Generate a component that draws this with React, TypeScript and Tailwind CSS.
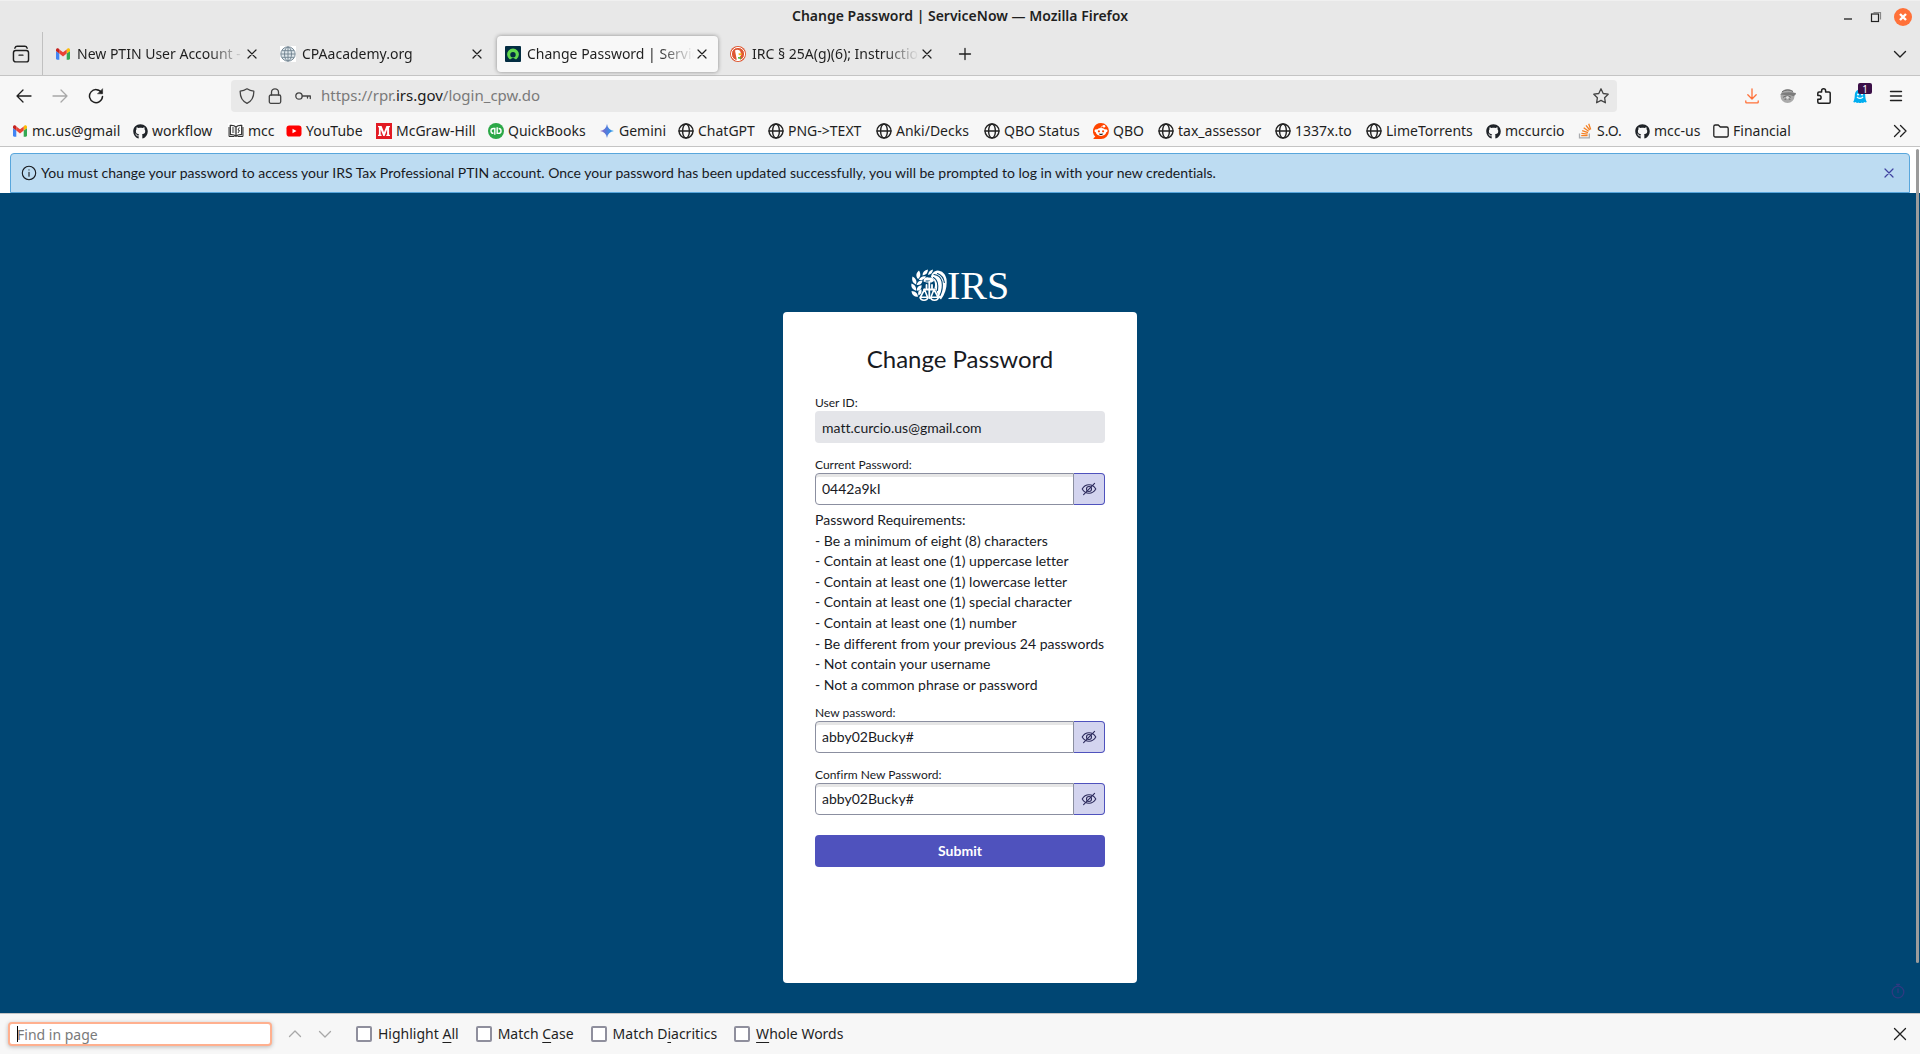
import React from "react";
import { FaGithub } from "react-icons/fa";

type IconProps = { className?: string };

function Stroke({ children, className = "size-4", width = 1.3 }: { children: React.ReactNode; className?: string; width?: number }) {
  return (
    <svg viewBox="0 0 16 16" className={`shrink-0 ${className}`} fill="none" stroke="currentColor" strokeWidth={width} strokeLinecap="round" strokeLinejoin="round" aria-hidden="true">
      {children}
    </svg>
  );
}

/* ---------- site icons ---------- */

function Gmail() {
  return (
    <svg viewBox="0 0 16 16" className="size-4 shrink-0" aria-hidden="true">
      <path d="M1 5v7.6c0 .7.5 1.2 1.200 1.200H4.300V7.400z" fill="#4285f4" />
      <path d="M11.700 13.800h2.100c.7 0 1.200-.5 1.200-1.200V5l-3.300 2.400z" fill="#34a853" />
      <path d="M11.700 3.400v4.200L15 5.100V4c0-1.500-1.600-2.200-2.700-1.300z" fill="#fbbc04" />
      <path d="M4.300 7.600V3.400L8 6.200l3.700-2.800v4.200L8 10.400z" fill="#ea4335" />
      <path d="M1 4v1.100l3.300 2.500V3.400l-.6-.7C2.600 1.800 1 2.500 1 4z" fill="#c5221f" />
    </svg>
  );
}

function Github() {
  return <FaGithub className="size-[15px] shrink-0 text-[#1f2328]" aria-hidden="true" />;
}

function Book() {
  return (
    <span className="flex size-4 shrink-0 items-center justify-center bg-white">
      <svg viewBox="0 0 16 16" className="size-4 text-[#333]" fill="none" stroke="currentColor" strokeWidth="1.300" aria-hidden="true">
        <path d="M8 4C6.500 2.600 4.500 2.300 2.300 2.500v9.200c2.200-.2 4.200.1 5.700 1.500 1.500-1.400 3.500-1.700 5.700-1.500V2.500C11.500 2.300 9.500 2.600 8 4zM8 4v9" />
        <path d="M1 4v9.500h5.500M15 4v9.500H9.500M4 5h2.300M4 7h2.300M4 9h2.300M11.300 4.500L10 7l1.500.5L10 10" strokeWidth="1" />
      </svg>
    </span>
  );
}

function YouTube() {
  return (
    <svg viewBox="0 0 16 16" className="size-4 shrink-0" aria-hidden="true">
      <rect x="0.500" y="2.500" width="15" height="11" rx="2.800" fill="#f00" />
      <path d="M6.500 5.700v4.600l4-2.300z" fill="#fff" />
    </svg>
  );
}

function McGraw() {
  return (
    <svg viewBox="0 0 16 16" className="size-4 shrink-0" aria-hidden="true">
      <path d="M0 0h16v16H0z" fill="#e21a23" />
      <path d="M2 13V11.700h.9V4.300H2V3h3.600L8 9.200 10.400 3H14v1.300h-.9v7.400h.9V13h-3.700v-1.300h.8V6.500L8.600 13H7.300L4.700 6.500v5.200h.9V13z" fill="#fff" />
    </svg>
  );
}

function QuickBooks() {
  return (
    <svg viewBox="0 0 16 16" className="size-4 shrink-0" aria-hidden="true">
      <circle cx="8" cy="8" r="8" fill="#2ca847" />
      <path d="M6.800 11.800V5.500H5.400a2.400 2.400 0 000 4.800M9.200 4.200v6.200h1.400a2.400 2.400 0 000-4.900" fill="none" stroke="#fff" strokeWidth="1.400" />
    </svg>
  );
}

function Gemini() {
  return (
    <svg viewBox="0 0 16 16" className="size-4 shrink-0" aria-hidden="true">
      <defs>
        <linearGradient id="gem" x1="0" x2="1">
          <stop offset="0" stopColor="#9a6ac0" />
          <stop offset="0.400" stopColor="#5b76d8" />
          <stop offset="1" stopColor="#1fa3ee" />
        </linearGradient>
      </defs>
      <path d="M8 1c.6 4 3 6.400 7 7-4 .6-6.400 3-7 7-.6-4-3-6.400-7-7 4-.6 6.400-3 7-7z" fill="url(#gem)" />
    </svg>
  );
}

function Globe() {
  return (
    <Stroke className="size-4 text-[#222]" width={1.400}>
      <circle cx="8" cy="8" r="7" />
      <ellipse cx="8" cy="8" rx="3.400" ry="7" />
      <path d="M1 8h14" />
    </Stroke>
  );
}

function GreyGlobe() {
  return (
    <span className="flex size-4 shrink-0 bg-white">
      <svg viewBox="0 0 16 16" className="size-4" fill="none" stroke="#6d808d" strokeWidth="0.900" aria-hidden="true">
        <circle cx="8" cy="8" r="7.200" fill="#dfe7ec" />
        <ellipse cx="8" cy="8" rx="3.500" ry="7" />
        <path d="M8 1v14M1 8h14M2 4.700h12M2 11.300h12" />
      </svg>
    </span>
  );
}

function Reddit() {
  return (
    <svg viewBox="0 0 16 16" className="size-4 shrink-0" aria-hidden="true">
      <path d="M8 0a8 8 0 11-.1 16H.8c-.4 0-.6-.5-.3-.8l1.800-1.600A8 8 0 018 0z" fill="#ff4500" />
      <circle cx="3" cy="7.800" r="1.500" fill="#fff" />
      <circle cx="13" cy="7.800" r="1.500" fill="#fff" />
      <circle cx="11" cy="3.200" r="1.300" fill="#fff" />
      <path d="M8 5c.1-1.500.9-2 2.400-1.900" stroke="#fff" strokeWidth=".7" fill="none" />
      <ellipse cx="8" cy="9" rx="5.200" ry="3.900" fill="#fff" />
      <circle cx="5.900" cy="8.300" r="1.100" fill="#ff4500" />
      <circle cx="10.100" cy="8.300" r="1.100" fill="#ff4500" />
      <path d="M5.800 10.400c1.300.4 3.100.4 4.400 0-.4 1-1.200 1.500-2.200 1.500s-1.800-.5-2.200-1.500z" fill="#222" />
    </svg>
  );
}

function StackOverflow() {
  return (
    <svg viewBox="0 0 16 16" className="size-4 shrink-0" fill="none" strokeWidth="1.300" aria-hidden="true">
      <path d="M2.500 10.500v4.300h9.800v-4.300" stroke="#a9abae" />
      <path d="M4.200 12.700h6.400M4.400 10.300l6.200.8M5.200 7.600l5.800 2M6.700 4.700l5 3.500M9 2.300l3.700 4.700M11.700.8l2 5.700" stroke="#f48024" />
    </svg>
  );
}

function Folder() {
  return (
    <Stroke className="size-4 text-[#222]" width={1.300}>
      <path d="M.8 12.500v-9A1.500 1.500 0 012.300 2h3l2 2h6.400a1.500 1.500 0 011.500 1.500v7a1.500 1.500 0 01-1.500 1.500H2.300a1.500 1.500 0 01-1.500-1.500z" />
    </Stroke>
  );
}

function ServiceNow() {
  return (
    <svg viewBox="0 0 16 16" className="size-4 shrink-0" aria-hidden="true">
      <rect width="16" height="16" rx="1" fill="#032d42" />
      <path d="M4.300 13a5.900 5.900 0 117.400 0c-.5.4-1.100.4-1.600 0a3.200 3.200 0 00-4.200 0c-.5.400-1.100.400-1.600 0z" fill="#62d84e" />
      <circle cx="8" cy="8.700" r="2.700" fill="#032d42" />
    </svg>
  );
}

function DuckDuckGo() {
  return (
    <svg viewBox="0 0 16 16" className="size-4 shrink-0" aria-hidden="true">
      <circle cx="8" cy="8" r="8" fill="#de5833" />
      <circle cx="8" cy="8" r="6.600" fill="none" stroke="#fff" strokeWidth="1" />
      <path d="M5 4.500C6.500 3 10 3.500 10.500 6l.7 3-1.500 2 .6 3c-1.300.4-2.600.3-3.500 0z" fill="#fff" />
      <path d="M8.500 7.200l3.300.4-.4 1.400-2.600.2z" fill="#fdb813" />
      <path d="M8 11l3 .3v1.700l-3-.6z" fill="#4cba3c" />
    </svg>
  );
}

/* ---------- browser chrome icons ---------- */

const Close = ({ className = "size-4" }: IconProps) => (
  <Stroke className={className} width={1.200}>
    <path d="M4 4l8 8M12 4l-8 8" />
  </Stroke>
);

const ChevronDown = ({ className = "size-4" }: IconProps) => (
  <Stroke className={className} width={1.400}>
    <path d="M2.500 5.500L8 11l5.500-5.500" />
  </Stroke>
);

function EyeOff() {
  return (
    <Stroke className="size-4 text-[#2c2a5c]" width={1.100}>
      <path d="M1.200 8c1.700-2.900 4.100-4.200 6.800-4.200s5.100 1.300 6.800 4.200c-1.700 2.900-4.100 4.200-6.800 4.200S2.900 10.900 1.200 8z" />
      <circle cx="8" cy="8" r="2.500" />
      <path d="M2.600 13.600L13.600 2.400" />
    </Stroke>
  );
}

/* ---------- data ---------- */

const tabs = [
  { title: "New PTIN User Account -", icon: <Gmail /> },
  { title: "CPAacademy.org", icon: <GreyGlobe /> },
  { title: "Change Password | Servic", icon: <ServiceNow />, active: true },
  { title: "IRC § 25A(g)(6); Instructio", icon: <DuckDuckGo /> },
];

const bookmarks = [
  { label: "mc.us@gmail", icon: <Gmail />, width: "w-[121px]" },
  { label: "workflow", icon: <Github />, width: "w-[95px]" },
  { label: "mcc", icon: <Book />, width: "w-[58px]" },
  { label: "YouTube", icon: <YouTube />, width: "w-[90px]" },
  { label: "McGraw-Hill", icon: <McGraw />, width: "w-[112px]" },
  { label: "QuickBooks", icon: <QuickBooks />, width: "w-[111px]" },
  { label: "Gemini", icon: <Gemini />, width: "w-[79px]" },
  { label: "ChatGPT", icon: <Globe />, width: "w-[90px]" },
  { label: "PNG->TEXT", icon: <Globe />, width: "w-[108px]" },
  { label: "Anki/Decks", icon: <Globe />, width: "w-[108px]" },
  { label: "QBO Status", icon: <Globe />, width: "w-[109px]" },
  { label: "QBO", icon: <Reddit />, width: "w-[65px]" },
  { label: "tax_assessor", icon: <Globe />, width: "w-[117px]" },
  { label: "1337x.to", icon: <Globe />, width: "w-[91px]" },
  { label: "LimeTorrents", icon: <Globe />, width: "w-[120px]" },
  { label: "mccurcio", icon: <Github />, width: "w-[91px]" },
  { label: "S.O.", icon: <StackOverflow />, width: "w-[58px]" },
  { label: "mcc-us", icon: <Github />, width: "w-[78px]" },
  { label: "Financial", icon: <Folder />, width: "w-[90px]" },
];

const requirements = [
  "- Be a minimum of eight (8) characters",
  "- Contain at least one (1) uppercase letter",
  "- Contain at least one (1) lowercase letter",
  "- Contain at least one (1) special character",
  "- Contain at least one (1) number",
  "- Be different from your previous 24 passwords",
  "- Not contain your username",
  "- Not a common phrase or password",
];

/* ---------- browser chrome ---------- */

function TitleBar() {
  return (
    <header className="grid h-8 grid-cols-[1fr_auto_1fr] items-center border-t border-[#f0f0f0] bg-[#e8e8e8]">
      <h1 className="col-start-2 pb-0.5 text-sm font-semibold">Change Password | ServiceNow — Mozilla Firefox</h1>
      <div className="flex items-center justify-end gap-2 pr-2">
        <button aria-label="Minimize" className="flex size-5 items-center justify-center">
          <Stroke className="size-4"><path d="M4 10h8" strokeLinecap="butt" /></Stroke>
        </button>
        <button aria-label="Restore" className="flex size-5 items-center justify-center">
          <svg viewBox="0 0 16 16" className="size-4" fill="none" strokeWidth="1.200" aria-hidden="true">
            <path d="M5.500 3.500h7v7" stroke="#888" />
            <rect x="3.500" y="5" width="7" height="7.500" stroke="#222" />
          </svg>
        </button>
        <button aria-label="Close window" className="flex size-[18px] items-center justify-center rounded-full bg-[#ff7139] text-white">
          <Stroke className="size-4" width={2.400}><path d="M5 5l6 6M11 5l-6 6" strokeLinecap="butt" /></Stroke>
        </button>
      </div>
    </header>
  );
}

function TabBar() {
  return (
    <div className="flex h-11 items-center border-b border-[#c4c4c4] bg-[#e8e8e8]">
      <button aria-label="View recent browsing" className="flex h-full w-[43px] items-center justify-center border-r border-[#c0c0c0]">
        <Stroke className="size-[18px]" width={1.300}>
          <rect x="1.300" y="4.800" width="13.400" height="10.200" rx="2" />
          <path d="M2.500 2.800C3 1.500 3.800 1.200 4.600 1.200h6.800c.8 0 1.600.3 2.100 1.600M6.300 9h3.400" />
        </Stroke>
      </button>
      <div className="ml-0.5 flex pt-px">
        {tabs.map((t) => (
          <div
            key={t.title}
            className={`mx-0.5 flex h-9 w-[221px] items-center pr-1 pl-2 ${t.active ? "rounded bg-[#f8f8f8] shadow-[0_0_4px_rgba(0,0,0,0.4)]" : ""}`}
          >
            {t.icon}
            <span className="ml-1.5 min-w-0 flex-1 overflow-hidden whitespace-nowrap [mask-image:linear-gradient(to_left,transparent,black_36px)]">{t.title}</span>
            <button aria-label={`Close ${t.title}`} className="-ml-1 flex size-6 items-center justify-center">
              <Close />
            </button>
          </div>
        ))}
      </div>
      <button aria-label="New tab" className="ml-0.5 flex size-9 items-center justify-center">
        <Stroke width={1.300}><path d="M8 2.500v11M2.500 8h11" /></Stroke>
      </button>
      <button aria-label="List all tabs" className="mr-1 ml-auto flex size-8 items-center justify-center">
        <ChevronDown />
      </button>
    </div>
  );
}

function NavButton({ label, children, className = "" }: { label: string; children: React.ReactNode; className?: string }) {
  return (
    <button aria-label={label} className={`relative flex h-8 w-9 shrink-0 items-center justify-center ${className}`}>
      {children}
    </button>
  );
}

function NavBar() {
  return (
    <nav className="flex h-10 items-center px-1.5">
      <NavButton label="Back"><Stroke width={1.300}><path d="M1 8h14M7 2L1 8l6 6" /></Stroke></NavButton>
      <NavButton label="Forward" className="text-[#a8a8a8]"><Stroke width={1.300}><path d="M15 8H1M9 2l6 6-6 6" /></Stroke></NavButton>
      <NavButton label="Reload">
        <Stroke width={1.500}>
          <path d="M13.600 4.800A6.500 6.500 0 1014.500 8.500" />
          <path d="M14.600 1v4.800H9.800z" fill="currentColor" strokeWidth=".5" />
        </Stroke>
      </NavButton>
      <div className="ml-[117px] flex h-8 min-w-0 flex-1 items-center rounded bg-[#e9e9e9] px-2 text-[#444]">
        <div className="flex items-center gap-3">
          <Stroke width={1.300}><path d="M8 .8c2.300 1.600 4.400 2.200 6.800 2.300C15 9 12.600 13.300 8 15.300 3.400 13.300 1 9 1.200 3.100 3.600 3 5.700 2.400 8 .8z" /></Stroke>
          <Stroke width={1.300}><rect x="2.300" y="7" width="11.400" height="8.300" rx="1.500" /><path d="M4.500 7V4.300a3.500 3.500 0 017 0V7" /></Stroke>
          <Stroke width={1.300}><circle cx="4" cy="8" r="3.200" /><path d="M7.200 8H15.300v2.500M12.500 8v2" /></Stroke>
        </div>
        <a href="https://rpr.irs.gov/login_cpw.do" className="ml-2.5 text-[15px] text-[#7a7a7a]">
          https://rpr.<span className="text-[#1a1a1a]">irs.gov</span>/login_cpw.do
        </a>
        <button aria-label="Bookmark this page" className="ml-auto">
          <Stroke width={1.300}><path d="M8 .8l2.200 4.700 5 .7-3.600 3.500.8 5.100L8 12.400l-4.400 2.400.8-5.100L.8 6.200l5-.7z" /></Stroke>
        </button>
      </div>
      <div className="ml-[117px] flex">
        <NavButton label="Downloads" className="text-[#ff7139]"><Stroke width={1.300}><path d="M8 .8v10M3.800 6.800L8 11l4.200-4.200M1.800 13v1.200c0 .4.300.7.7.7h11c.4 0 .7-.3.7-.7V13" /></Stroke></NavButton>
        <NavButton label="Tracker">
          <svg viewBox="0 0 16 16" className="size-4" aria-hidden="true">
            <circle cx="7.500" cy="8" r="7" fill="#aaa" />
            <path d="M0 6.500c3-2.500 9-3 16-1.500l-.5 1.800-2 1.500-3-1L5 7z" fill="#7c7c7c" />
            <path d="M3 9.500c2-2 6-2 8 0M4.500 12c1.500-2 4.500-2 6 0M2 4c3-2.500 8-2.500 11-.5" stroke="#666" fill="none" />
            <circle cx="7.500" cy="9.500" r="1.500" fill="#ddd" />
          </svg>
        </NavButton>
        <NavButton label="Extensions">
          <Stroke width={1.500}><path d="M1.800 5.200a1.200 1.200 0 011.200-1.200h2.600V2.800a2 2 0 014 0V4H13a1.200 1.200 0 011.200 1.200v8.900c0 .7-.4 1.100-1.100 1.100H3a1.200 1.200 0 01-1.200-1.200v-2.700h1.400a1.900 1.900 0 000-3.800H1.800z" /></Stroke>
        </NavButton>
        <NavButton label="Ghostery, 1 notification">
          <svg viewBox="0 0 16 16" className="size-4" aria-hidden="true">
            <path d="M8 1.500C4.500 1.500 3 4 2.800 7c-.1 3-.5 5-1.600 7 1 .6 1.800.5 2.500 0 .8 1 1.900 1.200 2.700.4.8.9 2.400.9 3.200 0 .8.800 1.900.600 2.700-.4.700.5 1.500.6 2.500 0-1.100-2-1.500-4-1.600-7C13 4 11.500 1.500 8 1.500z" fill="#00aef0" />
            <path d="M5 8.800c1.300 2 4.700 2 6 0" stroke="#fff" strokeWidth="1.200" fill="none" />
            <circle cx="6" cy="6.500" r="1" fill="#fff" />
            <circle cx="10" cy="6.500" r="1" fill="#fff" />
          </svg>
          <span className="absolute top-[3px] right-1.5 flex h-[11px] w-3.5 items-center justify-center rounded-xs bg-[#3b0f47] text-[10px] leading-none text-white">1</span>
        </NavButton>
        <NavButton label="Open application menu"><Stroke width={1.400}><path d="M2.500 3.500h11M2.500 8h11M2.500 12.500h11" /></Stroke></NavButton>
      </div>
    </nav>
  );
}

function Bookmarks() {
  return (
    <div className="flex h-[30px] items-center pr-3 pl-3">
      {bookmarks.map((b) => (
        <a key={b.label} href="#" className={`flex shrink-0 items-center gap-1 whitespace-nowrap ${b.width}`}>
          {b.icon}
          {b.label}
        </a>
      ))}
      <button aria-label="Show more bookmarks" className="ml-auto">
        <Stroke><path d="M2.500 2.500L8 8l-5.500 5.500M8.500 2.500L14 8l-5.500 5.500" /></Stroke>
      </button>
    </div>
  );
}

function FindOption({ id, before, accel, after }: { id: string; before: string; accel: string; after: string }) {
  return (
    <div className="flex items-center gap-1.5">
      <input id={id} type="checkbox" className="size-4 appearance-none rounded-xs border-2 border-[#8f8f9d] bg-white" />
      <label htmlFor={id}>
        {before}
        <span className="underline underline-offset-3">{accel}</span>
        {after}
      </label>
    </div>
  );
}

function FindBar() {
  return (
    <footer className="flex h-[41px] items-center border-t border-[#c4c4c4] bg-[#f7f7f7] pr-3 pl-2">
      <div className="relative">
        <input
          type="text"
          aria-label="Find in page"
          placeholder="Find in page"
          className="h-6 w-[264px] rounded border-2 border-[#ffb08f] bg-white px-[7px] shadow-[0_1px_4px_rgba(0,0,0,0.25)] outline-none placeholder:text-[#7a7a7a]"
        />
        <span className="absolute top-1 left-[9px] h-4 w-px bg-black" />
      </div>
      <div className="ml-[15px] flex gap-3.5 text-[#a8a8a8]">
        <button aria-label="Find previous"><Stroke><path d="M2.500 10.500L8 5l5.500 5.500" /></Stroke></button>
        <button aria-label="Find next"><Stroke><path d="M2.500 5.500L8 11l5.500-5.500" /></Stroke></button>
      </div>
      <div className="ml-[23px] flex gap-[17px]">
        <FindOption id="hl" before="Highlight " accel="A" after="ll" />
        <FindOption id="mc" before="Match " accel="C" after="ase" />
        <FindOption id="md" before="Match D" accel="i" after="acritics" />
        <FindOption id="ww" before="" accel="W" after="hole Words" />
      </div>
      <button aria-label="Close find bar" className="ml-auto"><Stroke><path d="M2.500 2.500l11 11M13.500 2.500l-11 11" /></Stroke></button>
    </footer>
  );
}

/* ---------- page content ---------- */

function IrsLogo() {
  return (
    <div className="flex items-center text-white">
      <svg viewBox="0 0 36 33" className="h-[33px] w-9" fill="none" stroke="currentColor" strokeLinecap="round" strokeLinejoin="round" aria-hidden="true">
        <g fill="currentColor" stroke="none">
          <path d="M11.500 6.500c0-3.500 2-5.500 5.500-6 0 3.500-2 5.500-5.500 6zM17 6c.3-3 2.200-5 5-5.500-.2 3-1.800 5-5 5.500z" />
          <path d="M7 10C4.500 7 5 4 8 1.500 10 5 9.800 8 7 10zM7.800 11c1.800-3.300 4.200-4.300 7.200-3.500-1.700 3-4 4-7.200 3.500z" />
          <path d="M5 15.500C1.500 13.800.5 11 1.500 7.500c3.500 2 4.700 4.500 3.500 8zM5.500 16c1-3.300 3-4.700 6-4.500-.5 3.500-2.800 5-6 4.500z" />
          <path d="M5 21.800C1.200 20.500-.3 18 .5 14.500c3.700 1.500 5.200 3.800 4.500 7.300zM5.700 21.800c0-3.500 1.700-5.300 5-5.600.1 3.600-1.700 5.600-5 5.600z" />
          <path d="M7 27.800c-4 0-6.200-2-6.500-5.800 4 .2 6.300 2.300 6.500 5.800zM7.500 26.500c-1-3 0-5.200 2.700-6.500 1 3 .1 5.200-2.700 6.500z" />
          <path d="M20 8c.5-3.500 3-6 6.500-6.500C31 1.500 34.500 5 35.500 10c.8 7-.8 14-5.500 20.500l-2.500-2L25 20l-1.500-1c1-3 .5-6-1-8.500z" />
          <path d="M12.500 12.500c0-3.500 3-5 5.500-3.800 2.500-.7 4.500.5 5 3.300l-2.500 1.500h-5z" />
        </g>
        <path d="M23 5.500c4 .5 7 3 8 7 .8 4.500.2 9.500-2 14M22.500 8.500c3.500 2 5 6 4 13M26.500 4.500c4 1.500 6.200 4.500 6.800 9" stroke="#004673" strokeWidth="1.100" />
        <path d="M15 12h3.500" stroke="#004673" strokeWidth="1.200" />
        <path d="M13 20.500h11M18.300 13v16M15.500 16v3M21 16v3" strokeWidth="1.800" />
        <path d="M9.500 28l4-7.500 3 7.500M9 28.200h8c-.5 4-7.500 4-8 0zM20 28l3-7.500 4 7.500M19.500 28.200h8c-.5 4-7.500 4-8 0z" strokeWidth="1.600" />
      </svg>
      <span className="font-[Liberation_Serif,serif] text-[40px] leading-8">IRS</span>
    </div>
  );
}

function PasswordField({ id, label, value }: { id: string; label: string; value: string }) {
  return (
    <div>
      <label htmlFor={id} className="block text-xs leading-4">{label}</label>
      <div className="flex h-8">
        <input
          id={id}
          type="text"
          defaultValue={value}
          className="min-w-0 flex-1 rounded-l border border-[#8b8fa0] bg-white px-1.5 shadow-[inset_0_3px_0_#e6e6e6] outline-none"
        />
        <button type="button" aria-label={`Hide ${label}`} className="flex w-[31px] items-center justify-center rounded-r border border-l-0 border-[#4f52bd] bg-[#d3d4ef]">
          <EyeOff />
        </button>
      </div>
    </div>
  );
}

function LoginPage() {
  return (
    <main className="relative flex flex-1 flex-col bg-white font-[Lato,sans-serif] text-sm text-[#181a1f] [font-variant-ligatures:none]">
      <div role="alert" className="mx-2.5 mt-1.5 flex h-10 items-center rounded-t border border-[#58a6dc] bg-[#bddcf2] pr-3 pl-2.5">
        <Stroke width={1.100}><circle cx="8" cy="8" r="6.700" /><path d="M8 7.300v4M8 4.700v.2" /></Stroke>
        <p className="ml-1 flex-1">
          You must change your password to access your IRS Tax Professional PTIN account. Once your password has been updated successfully, you will be prompted to log in with your new credentials.
        </p>
        <button aria-label="Dismiss" className="text-[#3f42a0]"><Close /></button>
      </div>
      <div className="flex flex-1 flex-col items-center bg-[#004673] pt-[76px]">
        <IrsLogo />
        <form className="mt-2.5 flex min-h-[671px] w-[354px] flex-col rounded bg-white px-8" onSubmit={(e) => e.preventDefault()}>
          <h2 className="mt-[31px] text-center text-2xl leading-8">Change Password</h2>
          <div className="mt-5">
            <label htmlFor="user" className="block text-xs leading-4">User ID:</label>
            <input id="user" type="text" readOnly value="matt.curcio.us@gmail.com" className="h-8 w-full rounded bg-[#e4e5e9] px-[7px] outline-none" />
          </div>
          <div className="mt-3.5">
            <PasswordField id="current" label="Current Password:" value="0442a9kI" />
          </div>
          <ul className="mt-[5px] grid min-h-[185px] auto-rows-fr items-center leading-5">
            <li>Password Requirements:</li>
            {requirements.map((r) => <li key={r}>{r}</li>)}
          </ul>
          <div className="mt-2.5 flex flex-col gap-3.5">
            <PasswordField id="new" label="New password:" value="abby02Bucky#" />
            <PasswordField id="confirm" label="Confirm New Password:" value="abby02Bucky#" />
          </div>
          <button type="submit" className="mt-5 h-8 rounded bg-[#4f52bd] font-bold text-white">Submit</button>
        </form>
      </div>
      <button aria-label="Response time" className="absolute right-3.5 bottom-3.5 text-[#2f3a80]">
        <Stroke><circle cx="8" cy="9" r="5.800" /><path d="M8 6v3.500M6.500 1.300h3M8 1.300v2" /></Stroke>
      </button>
      <div className="absolute top-0.5 right-px bottom-[50px] w-[3px] rounded-full bg-[#9b9b9b]" />
    </main>
  );
}

export default function App() {
  return (
    <div className="flex min-h-screen flex-col bg-[#f7f7f7] font-[Noto_Sans,sans-serif] text-sm text-[#1f1f1f]">
      <TitleBar />
      <TabBar />
      <div className="border-b border-[#c4c4c4]">
        <NavBar />
        <Bookmarks />
      </div>
      <LoginPage />
      <FindBar />
    </div>
  );
}
